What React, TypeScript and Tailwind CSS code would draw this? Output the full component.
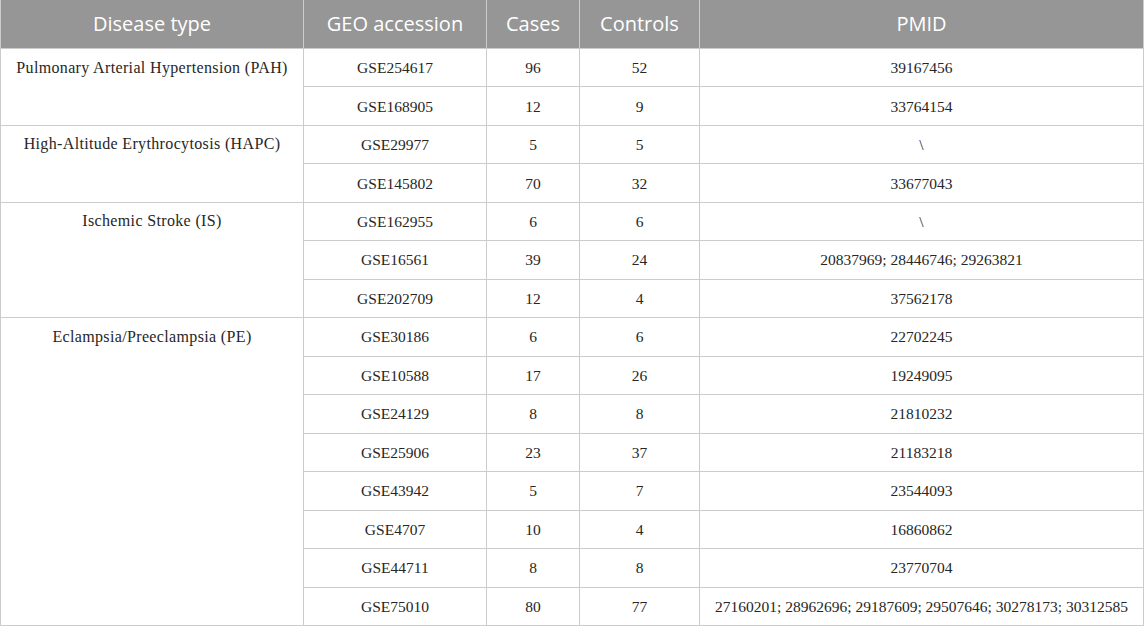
const groups = [
  {
    name: "Pulmonary Arterial Hypertension (PAH)",
    rows: [
      ["GSE254617", "96", "52", "39167456"],
      ["GSE168905", "12", "9", "33764154"],
    ],
  },
  {
    name: "High-Altitude Erythrocytosis (HAPC)",
    rows: [
      ["GSE29977", "5", "5", "\\"],
      ["GSE145802", "70", "32", "33677043"],
    ],
  },
  {
    name: "Ischemic Stroke (IS)",
    rows: [
      ["GSE162955", "6", "6", "\\"],
      ["GSE16561", "39", "24", "20837969; 28446746; 29263821"],
      ["GSE202709", "12", "4", "37562178"],
    ],
  },
  {
    name: "Eclampsia/Preeclampsia (PE)",
    rows: [
      ["GSE30186", "6", "6", "22702245"],
      ["GSE10588", "17", "26", "19249095"],
      ["GSE24129", "8", "8", "21810232"],
      ["GSE25906", "23", "37", "21183218"],
      ["GSE43942", "5", "7", "23544093"],
      ["GSE4707", "10", "4", "16860862"],
      ["GSE44711", "8", "8", "23770704"],
      ["GSE75010", "80", "77", "27160201; 28962696; 29187609; 29507646; 30278173; 30312585"],
    ],
  },
];

const HEADERS = ["Disease type", "GEO accession", "Cases", "Controls", "PMID"];

export default function App() {
  let rowStart = 2;
  const cells: JSX.Element[] = [];

  // disease name spans its rows; data cells get explicit grid slots
  groups.forEach((g) => {
    const span = g.rows.length;
    cells.push(
      <div
        key={g.name}
        className="bg-white flex justify-center text-[16px] tracking-[0.35px]"
        style={{ gridColumn: "1", gridRow: `${rowStart} / span ${span}` }}
      >
        <div className="h-[37px] flex items-center">{g.name}</div>
      </div>
    );
    g.rows.forEach((r, i) => {
      r.forEach((v, j) => {
        cells.push(
          <div
            key={`${g.name}-${i}-${j}`}
            className="bg-white flex items-center justify-center"
            style={{ gridColumn: `${j + 2}`, gridRow: `${rowStart + i}` }}
          >
            {v}
          </div>
        );
      });
    });
    rowStart += span;
  });

  return (
    <div className="w-[1145px] h-[626px] bg-white">
      <div className="w-[1144px] h-[626px] grid grid-cols-[302px_182px_92px_119px_1fr] grid-rows-[48px_repeat(15,1fr)] gap-px bg-[#cccccc] pl-px pr-px pb-px text-[15.5px] text-[#262626] font-['Liberation_Serif','Times_New_Roman',serif]">
        {HEADERS.map((h) => (
          <div
            key={h}
            className="bg-[#969696] flex items-center justify-center text-white text-[20px] font-['Open_Sans','Noto_Sans',sans-serif]"
          >
            {h}
          </div>
        ))}
        {cells}
      </div>
    </div>
  );
}
